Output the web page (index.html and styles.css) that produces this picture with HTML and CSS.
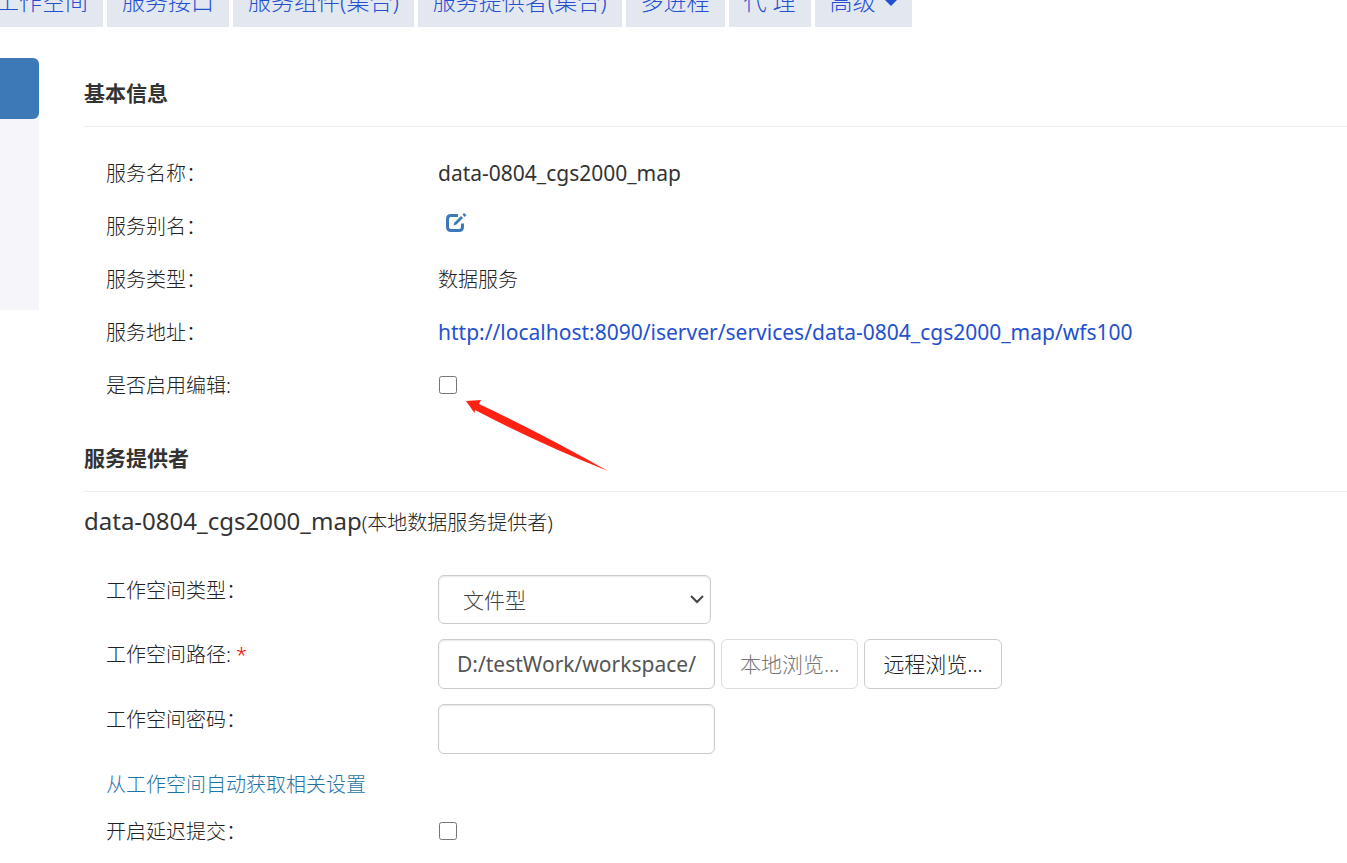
FILE: index.html
```
<!DOCTYPE html>
<html lang="zh-CN">
<head>
    <meta charset="UTF-8">
    <meta name="viewport" content="width=device-width, initial-scale=1.0">
    <title>data-0804_cgs2000_map</title>
    <link rel="stylesheet" href="styles.css">
</head>
<body>
    <nav class="tabs">
        <a href="#">工作空间</a>
        <a href="#">服务接口</a>
        <a href="#">服务组件(集合)</a>
        <a href="#">服务提供者(集合)</a>
        <a href="#">多进程</a>
        <a href="#">代 理</a>
        <a href="#">高级<span class="caret"></span></a>
    </nav>

    <div class="main">
        <aside class="sidebar">
            <div class="active"></div>
        </aside>

        <div class="content">
            <h2>基本信息</h2>
            <div class="info">
                <div class="row">
                    <span class="label">服务名称：</span>
                    <span class="latin">data-0804_cgs2000_map</span>
                </div>
                <div class="row">
                    <span class="label">服务别名：</span>
                    <button type="button" class="edit" aria-label="编辑">
                        <svg width="22" height="20" viewBox="0 0 22 20">
                            <path d="M13 2.500H6Q2.500 2.500 2.500 6V14Q2.500 17.500 6 17.500H14Q17.500 17.500 17.500 14V10.500" fill="none" stroke="#3e79b7" stroke-width="3"/>
                            <path d="M8.500 12.500L9.500 9.500L16 3L18 5L11.500 11.500Z" fill="#3e79b7"/>
                            <path d="M17.500 1.500L19 0L21.500 2L19.500 4Z" fill="#3e79b7"/>
                        </svg>
                    </button>
                </div>
                <div class="row">
                    <span class="label">服务类型：</span>
                    <span>数据服务</span>
                </div>
                <div class="row">
                    <span class="label">服务地址：</span>
                    <a class="latin" href="http://localhost:8090/iserver/services/data-0804_cgs2000_map/wfs100">http://localhost:8090/iserver/services/data-0804_cgs2000_map/wfs100</a>
                </div>
                <div class="row">
                    <label class="label" for="editable">是否启用编辑:</label>
                    <span class="check">
                        <input type="checkbox" id="editable">
                        <svg class="arrow" width="142" height="72" viewBox="0 0 142 72">
                            <path d="M0 1L15 0L13 4Q75 33 142 71Q72 43 9 10L8.500 13Z" fill="#ff2213"/>
                        </svg>
                    </span>
                </div>
            </div>

            <h2>服务提供者</h2>
            <p class="provider"><span class="name">data-0804_cgs2000_map</span>(本地数据服务提供者)</p>
            <form>
                <div class="field">
                    <label class="label" for="type">工作空间类型：</label>
                    <div class="select">
                        <select id="type">
                            <option>文件型</option>
                        </select>
                        <svg width="14" height="9" viewBox="0 0 14 9">
                            <path d="M1 1L7 7L13 1" fill="none" stroke="#444" stroke-width="2"/>
                        </svg>
                    </div>
                </div>
                <div class="field">
                    <label class="label" for="path">工作空间路径: <span class="required">*</span></label>
                    <div class="controls">
                        <input type="text" id="path" value="D:/testWork/workspace/">
                        <button type="button" class="btn" disabled>本地浏览...</button>
                        <button type="button" class="btn">远程浏览...</button>
                    </div>
                </div>
                <div class="field">
                    <label class="label" for="password">工作空间密码：</label>
                    <input type="password" id="password">
                </div>
                <div class="field">
                    <a class="auto" href="#">从工作空间自动获取相关设置</a>
                </div>
                <div class="field">
                    <label class="label" for="delay">开启延迟提交：</label>
                    <span class="check"><input type="checkbox" id="delay"></span>
                </div>
            </form>
        </div>
    </div>
</body>
</html>
```
FILE: styles.css
```
* { box-sizing: border-box; }
body {
    margin: 0;
    font-family: "Noto Sans", "Noto Sans CJK SC", sans-serif;
    font-size: 20px;
    font-weight: 300;
    color: #222;
    background: #fff;
    overflow: hidden;
}
a { color: #2450d0; text-decoration: none; }

/* tab bar, scrolled partly out of view */
.tabs { display: flex; gap: 4px; margin: -21px 0 0 -19px; }
.tabs a { display: flex; align-items: center; height: 48px; padding: 0 15px 6px; background: #e3e8f0; font-size: 23px; white-space: pre; }
.caret { margin: 6px 0 0 9px; border: 6px solid transparent; border-top-color: #2450d0; border-bottom: 0; }

.main { display: flex; align-items: flex-start; margin-top: 31px; }
.sidebar { flex: none; width: 39px; height: 252px; background: #f6f5fa; }
.sidebar .active { height: 61px; background: #3e79b7; border-radius: 0 6px 6px 0; }
.content { flex: 1; min-width: 0; margin-left: 45px; padding-top: 19px; }

h2 { margin: 0; padding-bottom: 17px; border-bottom: 1px solid #eee; color: #333; font-size: 21px; line-height: 32px; font-weight: 700; }
.info { margin: 19px 0 31px; padding-left: 22px; }
.row { display: flex; align-items: center; height: 53px; }
.label { flex: none; width: 332px; }
.latin { color: #333; font-size: 21px; font-weight: 400; }
a.latin { color: #2450d0; }
.edit { display: flex; margin-left: 7px; padding: 0 0 6px; border: 0; background: none; cursor: pointer; }
.check { position: relative; display: flex; align-items: center; }
input[type="checkbox"] { width: 18px; height: 18px; margin: 0 1px; }
.arrow { position: absolute; left: 28px; top: 24px; }

.provider { margin: 13px 0 36px; line-height: 32px; }
.provider .name { color: #333; font-size: 24px; font-weight: 400; }

form { display: flex; flex-direction: column; gap: 15px; padding-left: 22px; }
.field { display: flex; align-items: flex-start; line-height: 32px; }
.field .check { height: 30px; }
.required { color: #f00; }
.auto { color: #1f74a5; }
.controls { display: flex; gap: 6px; }
select, input[type="text"], input[type="password"] {
    width: 277px;
    height: 50px;
    padding: 0 18px;
    border: 1px solid #ccc;
    border-radius: 6px;
    box-shadow: inset 0 1px 2px rgba(0, 0, 0, 0.1);
    background: #fff;
    color: #555;
    font: inherit;
    font-size: 21px;
}
input[type="text"] { font-weight: 400; }
.select { position: relative; height: 49px; }
.select select { display: block; width: 273px; height: 49px; padding: 0 24px; color: #444; appearance: none; }
.select svg { position: absolute; right: 7px; top: 20px; pointer-events: none; }
.btn { height: 50px; padding: 0 18px; border: 1px solid #ccc; border-radius: 6px; background: #fff; color: #222; font: inherit; font-size: 21px; cursor: pointer; }
.btn:disabled { border-color: #ddd; color: #777; cursor: not-allowed; }
```
